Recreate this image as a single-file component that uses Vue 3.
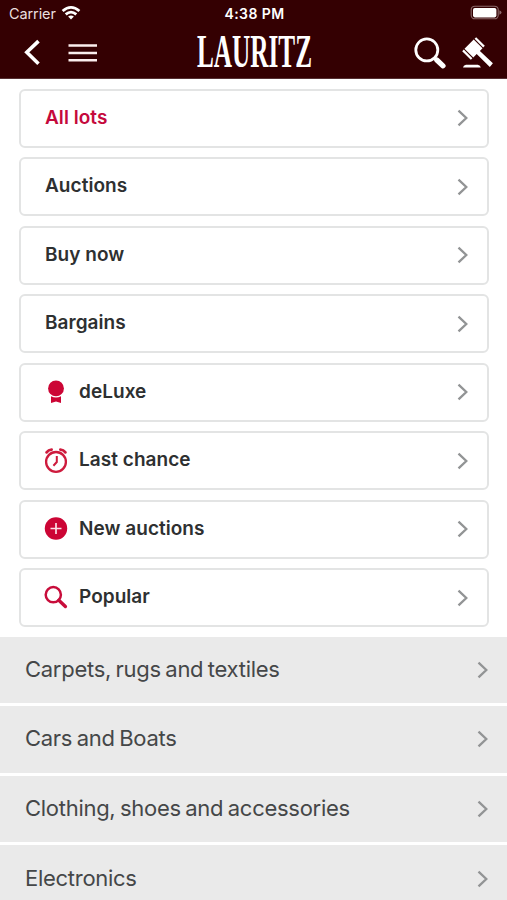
<script setup>
const cards = [
  { label: 'All lots', active: true },
  { label: 'Auctions' },
  { label: 'Buy now' },
  { label: 'Bargains' },
  { label: 'deLuxe', icon: 'rosette' },
  { label: 'Last chance', icon: 'alarm' },
  { label: 'New auctions', icon: 'plus' },
  { label: 'Popular', icon: 'search' },
]
const categories = [
  'Carpets, rugs and textiles',
  'Cars and Boats',
  'Clothing, shoes and accessories',
  'Electronics',
]
</script>

<template>
  <div class="screen">
    <header class="header">
      <div class="status">
        <div class="carrier">
          <span>Carrier</span>
          <svg class="wifi" width="20" height="16" viewBox="0 0 20 16" fill="none" stroke="#fff" stroke-width="2.8">
            <path d="M1.6 6 Q10 -1.2 18.4 6" />
            <path d="M4.7 9.4 Q10 4.9 15.3 9.4" />
            <path d="M10 14.6 L7.1 11.6 Q10 9.4 12.9 11.6 Z" fill="#fff" stroke="none" />
          </svg>
        </div>
        <span class="time">4:38 PM</span>
        <svg class="battery" width="32" height="16" viewBox="0 0 32 16">
          <rect x="1.2" y="1.2" width="27" height="12.6" rx="3.6" fill="none" stroke="#8b696b" stroke-width="1.1" />
          <rect x="3" y="3" width="23.4" height="9.4" rx="1.8" fill="#fff" />
          <path d="M29.4 5.2 Q31.5 6 31.5 7.5 Q31.5 9 29.4 9.8 Z" fill="#8b696b" />
        </svg>
      </div>
      <nav class="bar">
        <div class="side">
          <svg class="back" width="18" height="28" viewBox="0 0 18 28" fill="none" stroke="#fff" stroke-width="3.6">
            <path d="M14.5 2.1 L2.8 13.3 L14.5 24.7" />
          </svg>
          <svg class="menu" width="30" height="20" viewBox="0 0 30 20" stroke="#fbeeee" stroke-width="2.6">
            <path d="M.5 2.5 H29 M.5 10 H29 M.5 17.3 H29" />
          </svg>
        </div>
        <svg class="logo" width="117" height="60" viewBox="0 0 117 60">
          <text x="1" y="44" textLength="115" lengthAdjust="spacingAndGlyphs">LAURITZ</text>
        </svg>
        <div class="side right">
          <svg width="32" height="32" viewBox="0 0 32 32" fill="none" stroke="#fff">
            <circle cx="12.8" cy="12.9" r="11" stroke-width="2.8" />
            <path d="M20 20.5 L23 23.5" stroke-width="3" />
            <path d="M22.8 23 L29 28.8" stroke-width="5.2" stroke-linecap="round" />
          </svg>
          <svg class="gavel" width="32" height="32" viewBox="0 0 32 32" fill="#fff">
            <path d="M12.6 1.8 L14.2 .2 L22.8 8.8 L21.2 10.4 Z" />
            <path d="M.2 14.2 L1.8 12.6 L10.4 21.2 L8.8 22.8 Z" />
            <path d="M11.7 2.5 L20.5 11.3 L17.9 13.9 L30.9 26.3 L27.8 30 L14.7 17.1 L11.3 20.5 L2.5 11.7 Z" />
            <path d="M1 30.5 Q1.2 28.3 4 27.7 H15.8 Q18.4 28.3 18.8 30.5 Z" />
          </svg>
        </div>
      </nav>
    </header>

    <main>
      <ul class="cards">
        <li v-for="c in cards" :key="c.label" class="card" :class="{ active: c.active }">
          <svg v-if="c.icon" class="icon" width="24" height="26" viewBox="0 0 24 26">
            <g v-if="c.icon === 'rosette'" fill="#cc0535">
              <circle cx="12" cy="9.4" r="7.9" />
              <path d="M7 17.2 Q12 19.8 17 17.2 V24 L12 22.5 L7 24 Z" />
            </g>
            <g v-else-if="c.icon === 'alarm'" fill="none" stroke="#ce1b3d">
              <circle cx="12" cy="13.9" r="9.9" stroke-width="2.3" />
              <path d="M2.6 4.3 Q4.5 1.9 7.6 1.7 M16.4 1.7 Q19.5 1.9 21.4 4.3" stroke-width="2.8" stroke-linecap="round" />
              <path d="M12.8 8 V14 L9.4 17.7" stroke-width="2" />
            </g>
            <g v-else-if="c.icon === 'plus'">
              <circle cx="12" cy="12.5" r="11.2" fill="#cc0535" />
              <path d="M12 7 V18 M6.5 12.5 H17.5" stroke="#fbe0e6" stroke-width="1.7" />
            </g>
            <g v-else fill="none" stroke="#c80d3b">
              <circle cx="9.3" cy="9.7" r="7.6" stroke-width="2.5" />
              <path d="M14.8 15.2 L21.4 21.5" stroke-width="3.4" stroke-linecap="round" />
            </g>
          </svg>
          <span class="label">{{ c.label }}</span>
          <svg class="chevron" width="12" height="18" viewBox="0 0 12 18">
            <path d="M1.5 1.6 L9.3 9 L1.5 16.4" />
          </svg>
        </li>
      </ul>
      <ul class="categories">
        <li v-for="name in categories" :key="name" class="category">
          <span class="label">{{ name }}</span>
          <svg class="chevron" width="12" height="18" viewBox="0 0 12 18">
            <path d="M1.5 1.6 L9.3 9 L1.5 16.4" />
          </svg>
        </li>
      </ul>
    </main>
  </div>
</template>

<style>
body {
  margin: 0;
  background: #fff;
}
</style>

<style scoped>
.screen {
  width: 507px;
  height: 900px;
  overflow: hidden;
  background: #fff;
  font-family: Inter, "Liberation Sans", sans-serif;
}
svg {
  display: block;
  flex: none;
}
.header {
  height: 79px;
  box-sizing: border-box;
  background: #340002;
  border-bottom: 1px solid #563033;
  color: #fff;
}
.status {
  display: grid;
  grid-template-columns: 1fr auto 1fr;
  align-items: center;
  height: 27px;
  padding: 0 5px 0 9px;
  font-size: 14.5px;
}
.carrier {
  display: flex;
  align-items: center;
  gap: 5px;
  color: #eadfdf;
  letter-spacing: -0.1px;
}
.wifi {
  margin-top: -2px;
}
.time {
  margin-left: -2px;
  font-weight: 600;
  font-size: 14px;
  letter-spacing: 0.4px;
}
.battery {
  justify-self: end;
  margin-top: -1px;
}
.bar {
  display: flex;
  align-items: center;
  justify-content: space-between;
  height: 51px;
  padding: 0 13px 0 24px;
}
.side {
  display: flex;
  align-items: center;
  gap: 26px;
  width: 91px;
}
.side.right {
  gap: 16px;
  width: 80px;
}
.menu {
  margin-top: 1px;
}
.logo {
  margin-left: -20px;
  overflow: visible;
}
.logo text {
  font: bold 46px "Liberation Serif", serif;
  fill: #fff;
}
ul {
  list-style: none;
  margin: 0;
  padding: 0;
}
.cards {
  display: flex;
  flex-direction: column;
  gap: 9.5px;
  padding: 9.5px 18px 9.5px 19px;
}
.card {
  display: flex;
  align-items: center;
  height: 59px;
  box-sizing: border-box;
  padding: 0 18px 0 24px;
  border: 2px solid #e3e4e4;
  border-radius: 6px;
  color: #2e3031;
  font-size: 19px;
  font-weight: 600;
  letter-spacing: 0.04px;
}
.card.active {
  color: #c5093c;
}
.label {
  flex: 1;
  position: relative;
  top: -1px;
}
.icon {
  margin: 0 11px 0 -1px;
}
.chevron path {
  fill: none;
  stroke: #929495;
  stroke-width: 2.3;
}
.categories {
  display: flex;
  flex-direction: column;
  gap: 3px;
}
.category {
  display: flex;
  align-items: center;
  height: 66.6px;
  padding: 0 18px 0 25px;
  background: #eaeaea;
  color: #454748;
  font-size: 22px;
  letter-spacing: -0.28px;
  word-spacing: -1.4px;
}
</style>
